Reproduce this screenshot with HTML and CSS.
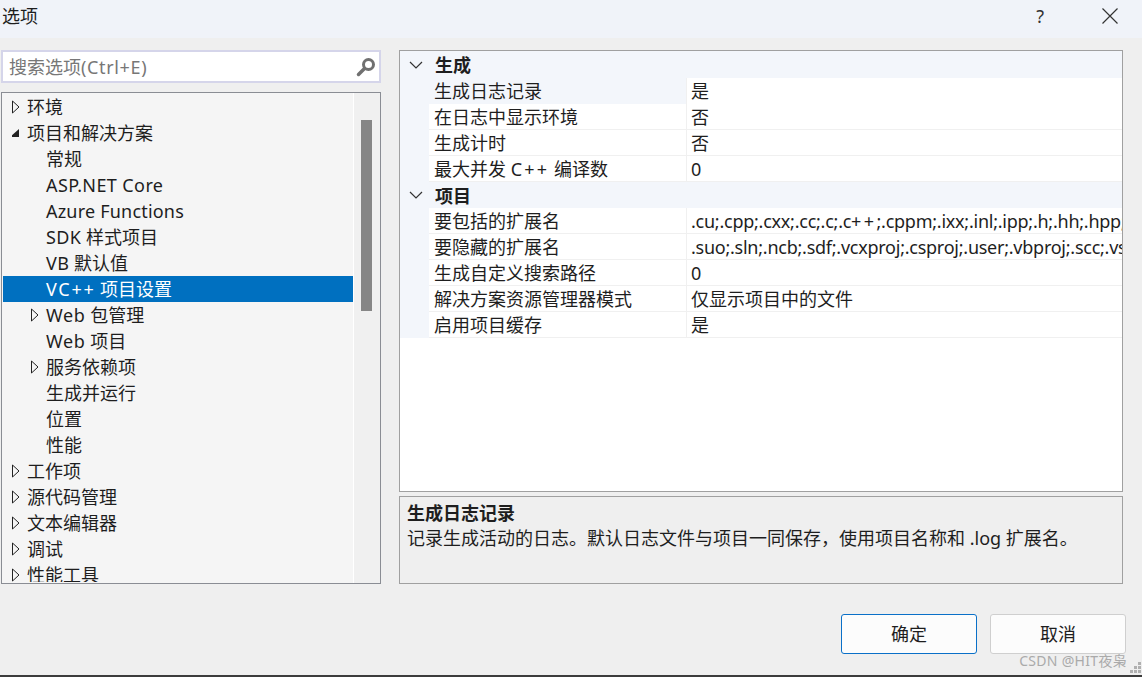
FILE: index.html
```html
<!DOCTYPE html>
<html lang="zh-CN">
<head>
<meta charset="utf-8">
<title>选项</title>
<link rel="stylesheet" href="styles.css">
</head>
<body>
<div class="window">
  <header class="titlebar">
    <span class="title">选项</span>
    <span class="help">?</span>
    <svg class="close" width="16" height="16" viewBox="0 0 16 16"><path d="M.5.5l15 15M15.500.5l-15 15" stroke="#333" stroke-width="1.200" fill="none"/></svg>
  </header>
  <main class="content">
    <section class="left">
      <div class="search">
        <span class="search-text">搜索选项<span class="lat-m">(Ctrl+E)</span></span>
        <svg class="search-icon" width="20" height="20" viewBox="0 0 20 20"><circle cx="12.500" cy="7.500" r="5" fill="none" stroke="#707070" stroke-width="3"/><path d="M8.500 11.500L2.500 17.500" stroke="#707070" stroke-width="3.500" stroke-linecap="round"/></svg>
      </div>
      <div class="tree">
        <ul class="tree-list">
          <li class="row"><svg class="arrow" width="8" height="14" viewBox="0 0 8 14"><path d="M.5 1l6.500 6-6.500 6z" fill="none" stroke="#222"/></svg><span>环境</span></li>
          <li class="row"><svg class="arrow" width="8" height="14" viewBox="0 0 8 14"><path d="M-2 11L7 3v8z" fill="#222"/></svg><span>项目和解决方案</span></li>
          <li class="row sub"><span>常规</span></li>
          <li class="row sub"><span class="lat">ASP.NET Core</span></li>
          <li class="row sub"><span class="lat-s">Azure Functions</span></li>
          <li class="row sub"><span class="lat">SDK</span> <span>&nbsp;样式项目</span></li>
          <li class="row sub"><span class="lat">VB</span> <span>&nbsp;默认值</span></li>
          <li class="row sub selected"><span class="lat-w">VC++</span> <span>&nbsp;项目设置</span></li>
          <li class="row sub-arrow"><svg class="arrow" width="8" height="14" viewBox="0 0 8 14"><path d="M.5 1l6.500 6-6.500 6z" fill="none" stroke="#222"/></svg><span class="lat-m">Web</span> <span>&nbsp;包管理</span></li>
          <li class="row sub"><span class="lat-m">Web</span> <span>&nbsp;项目</span></li>
          <li class="row sub-arrow"><svg class="arrow" width="8" height="14" viewBox="0 0 8 14"><path d="M.5 1l6.500 6-6.500 6z" fill="none" stroke="#222"/></svg><span>服务依赖项</span></li>
          <li class="row sub"><span>生成并运行</span></li>
          <li class="row sub"><span>位置</span></li>
          <li class="row sub"><span>性能</span></li>
          <li class="row"><svg class="arrow" width="8" height="14" viewBox="0 0 8 14"><path d="M.5 1l6.500 6-6.500 6z" fill="none" stroke="#222"/></svg><span>工作项</span></li>
          <li class="row"><svg class="arrow" width="8" height="14" viewBox="0 0 8 14"><path d="M.5 1l6.500 6-6.500 6z" fill="none" stroke="#222"/></svg><span>源代码管理</span></li>
          <li class="row"><svg class="arrow" width="8" height="14" viewBox="0 0 8 14"><path d="M.5 1l6.500 6-6.500 6z" fill="none" stroke="#222"/></svg><span>文本编辑器</span></li>
          <li class="row"><svg class="arrow" width="8" height="14" viewBox="0 0 8 14"><path d="M.5 1l6.500 6-6.500 6z" fill="none" stroke="#222"/></svg><span>调试</span></li>
          <li class="row"><svg class="arrow" width="8" height="14" viewBox="0 0 8 14"><path d="M.5 1l6.500 6-6.500 6z" fill="none" stroke="#222"/></svg><span>性能工具</span></li>
        </ul>
        <div class="scrollbar"><div class="thumb"></div></div>
      </div>
    </section>
    <section class="right">
      <div class="grid">
        <div class="cat"><svg class="chev" width="14" height="8" viewBox="0 0 14 8"><path d="M1 1l6 6 6-6" fill="none" stroke="#333" stroke-width="1.200"/></svg><b>生成</b></div>
        <div class="prop first"><span class="name">生成日志记录</span><span class="val">是</span></div>
        <div class="prop"><span class="name">在日志中显示环境</span><span class="val">否</span></div>
        <div class="prop"><span class="name">生成计时</span><span class="val">否</span></div>
        <div class="prop"><span class="name">最大并发 <span class="lat-x">C++</span> 编译数</span><span class="val">0</span></div>
        <div class="cat cat-second"><svg class="chev" width="14" height="8" viewBox="0 0 14 8"><path d="M1 1l6 6 6-6" fill="none" stroke="#333" stroke-width="1.200"/></svg><b>项目</b></div>
        <div class="prop"><span class="name">要包括的扩展名</span><span class="val ext-a">.cu;.cpp;.cxx;.cc;.c;.c<span class="plus">++</span>;.cppm;.ixx;.inl;.ipp;.h;.hh;.hpp;.hxx;.hm;.inc</span></div>
        <div class="prop"><span class="name">要隐藏的扩展名</span><span class="val ext-b">.suo;.sln;.ncb;.sdf;.vcxproj;.csproj;.user;.vbproj;.scc;.vsscc;.vspscc</span></div>
        <div class="prop"><span class="name">生成自定义搜索路径</span><span class="val">0</span></div>
        <div class="prop"><span class="name">解决方案资源管理器模式</span><span class="val">仅显示项目中的文件</span></div>
        <div class="prop"><span class="name">启用项目缓存</span><span class="val">是</span></div>
      </div>
      <div class="desc">
        <div class="desc-title">生成日志记录</div>
        <div class="desc-text">记录生成活动的日志。默认日志文件与项目一同保存，使用项目名称和 .log 扩展名。</div>
      </div>
    </section>
  </main>
  <footer class="footer">
    <button class="btn primary">确定</button>
    <button class="btn">取消</button>
  </footer>
  <span class="watermark">CSDN @HIT夜枭</span>
  <svg class="grip" width="12" height="12" viewBox="0 0 12 12"><g fill="#b0b0b0"><rect x="8" y="0" width="3" height="3"/><rect x="4" y="4" width="3" height="3"/><rect x="8" y="4" width="3" height="3"/><rect x="0" y="8" width="3" height="3"/><rect x="4" y="8" width="3" height="3"/><rect x="8" y="8" width="3" height="3"/></g></svg>
</div>
</body>
</html>
```

FILE: styles.css
```css
* { box-sizing: border-box; }
html, body { margin: 0; padding: 0; }
body {
  font-family: "Noto Sans", "Noto Sans CJK SC", sans-serif;
  font-size: 18px;
  color: #1e1e1e;
  overflow: hidden;
}
.lat { letter-spacing: .4px; }
.lat-s { letter-spacing: .2px; }
.lat-m { letter-spacing: .65px; }
.lat-w { letter-spacing: 1.7px; }
.lat-x { letter-spacing: 2.2px; }
.window {
  position: relative;
  width: 1142px;
  height: 677px;
  background: #efefef;
  border-bottom: 2px solid #3c3c3c;
  display: flex;
  flex-direction: column;
  overflow: hidden;
}
.titlebar {
  height: 38px;
  flex: none;
  background: #f0f3f9;
  display: flex;
  align-items: center;
  padding: 0 24px 7px 2px;
}
.title { flex: 1; line-height: 30px; }
.help { font-size: 18px; margin-right: 58px; color: #333; line-height: 24px; }
.content {
  flex: none;
  display: flex;
  padding: 12px 0 0 1px;
  gap: 18px;
  height: 546px;
}
.left { width: 380px; flex: none; display: flex; flex-direction: column; gap: 9px; }
.search {
  height: 33px;
  flex: none;
  border: 2px solid #d5d5ea;
  background: #fff;
  display: flex;
  align-items: center;
  justify-content: space-between;
  padding: 0 3px 0 6px;
}
.search-text { color: #777; line-height: 28px; }
.tree {
  height: 492px;
  flex: none;
  border: 1px solid #8a8d94;
  background: #f5f5f5;
  display: flex;
  overflow: hidden;
}
.tree-list {
  list-style: none;
  margin: 0;
  padding: 1px 0 0 1px;
  width: 351px;
  height: 489px;
  overflow: hidden;
  flex: none;
}
.row {
  height: 26px;
  line-height: 26px;
  display: flex;
  align-items: center;
  padding-left: 9px;
  white-space: nowrap;
}
.row .arrow { margin-right: 7px; flex: none; }
.row.sub { padding-left: 43px; }
.row.sub-arrow { padding-left: 28px; }
.row.sub-arrow .arrow { margin-right: 7px; }
.row.selected { background: #0070c0; color: #fff; }
.scrollbar {
  flex: 1;
  background: #f0f0f0;
  border-left: 1px solid #fff;
  padding: 27px 8px 0 7px;
}
.thumb { height: 191px; background: #868686; }
.right { width: 724px; flex: none; display: flex; flex-direction: column; gap: 4px; }
.grid {
  height: 442px;
  flex: none;
  border: 1px solid #a0a0a0;
  background: #fff;
  overflow: hidden;
}
.cat {
  height: 27px;
  background: #f3f6fb;
  display: flex;
  align-items: center;
  padding-left: 9px;
}
.cat-second { height: 26px; }
.chev { margin-right: 12px; flex: none; }
.cat b { font-weight: 700; line-height: 27px; position: relative; top: 1px; }
.prop {
  height: 26px;
  display: flex;
  line-height: 26px;
  margin-left: 29px;
  border-bottom: 1px solid #f0f0f0;
  white-space: nowrap;
  overflow: hidden;
  box-shadow: -29px 0 0 #f3f6fb;
}
.prop.first { margin-left: 0; border-bottom: 0; }
.prop.first .name { width: 287px; padding-left: 34px; flex: none; background: #f3f6fb; }
.name { width: 258px; padding-left: 5px; flex: none; border-right: 1px solid #f0f0f0; }
.val { padding-left: 3px; flex: none; margin-left: 1px; color: #1e1e1e; }
.ext-a { letter-spacing: -.25px; }
.plus { letter-spacing: 2.4px; }
.ext-b { letter-spacing: -.25px; }
.desc {
  height: 88px;
  flex: none;
  border: 1px solid #a0a0a0;
  padding: 3px 7px;
  line-height: 26px;
}
.desc-title { font-weight: 700; }
.desc-text { margin-top: -1px; }
.footer {
  flex: 1;
  display: flex;
  justify-content: flex-end;
  gap: 13px;
  padding: 30px 16px 0 0;
}
.btn {
  width: 136px;
  height: 40px;
  font: inherit;
  line-height: 36px;
  background: #fcfcfc;
  color: #1e1e1e;
  border: 1px solid #cfcfcf;
  border-radius: 3px;
  padding: 0;
}
.btn.primary { border-color: #0a70c8; }
.watermark {
  position: absolute;
  right: 15px;
  bottom: 4px;
  font-size: 14px;
  line-height: 20px;
  letter-spacing: .3px;
  color: #aaa;
}
.grip { position: absolute; right: 0; bottom: 1px; }
```
